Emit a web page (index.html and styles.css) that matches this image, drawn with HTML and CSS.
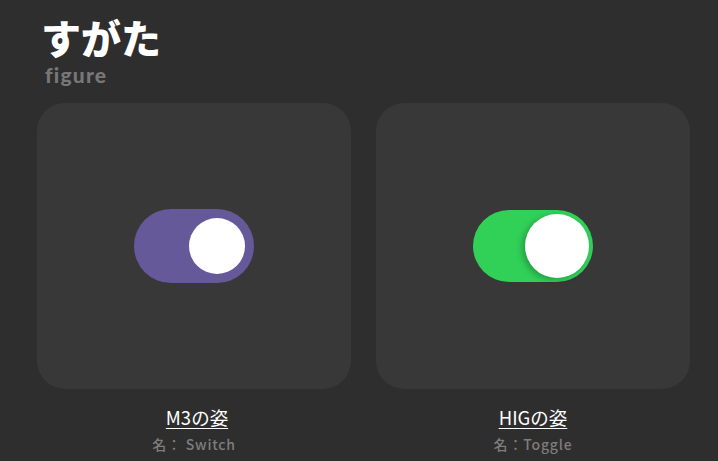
FILE: index.html
```html
<!DOCTYPE html>
<html lang="ja">
<head>
<meta charset="utf-8">
<link rel="stylesheet" href="styles.css">
</head>
<body>
<div class="page">
  <header class="head">
    <h1 class="title">すがた</h1>
    <div class="subtitle">figure</div>
  </header>
  <div class="grid">
    <div class="item">
      <div class="card">
        <div class="m3-track"><div class="m3-thumb"></div></div>
      </div>
      <div class="label label-shift"><a class="link">M3の姿</a></div>
      <div class="name">名： Switch</div>
    </div>
    <div class="item">
      <div class="card">
        <div class="hig-track"><div class="hig-thumb"></div></div>
      </div>
      <div class="label"><a class="link">HIGの姿</a></div>
      <div class="name">名：Toggle</div>
    </div>
  </div>
</div>
</body>
</html>
```
FILE: styles.css
```css
html, body {
  margin: 0;
  background: #2e2e2e;
  height: 100%;
  overflow: hidden;
}
.page {
  padding: 15px 0 0 37px;
  font-family: "Noto Sans CJK JP", "Noto Sans", sans-serif;
}
.head {
  padding-left: 4px;
}
.title {
  margin: 0;
  font-size: 40px;
  line-height: 44px;
  font-weight: 900;
  color: #ffffff;
}
.subtitle {
  margin-top: 4px;
  margin-left: 4px;
  font-family: Lato, "Noto Sans", sans-serif;
  font-size: 21px;
  line-height: 24px;
  font-weight: 900;
  color: #777777;
  letter-spacing: 1.2px;
}
.grid {
  margin-top: 16px;
  display: grid;
  grid-template-columns: 314px 314px;
  column-gap: 25px;
}
.card {
  height: 286px;
  background: #383838;
  border-radius: 28px;
  display: flex;
  align-items: center;
  justify-content: center;
}
.m3-track {
  width: 120px;
  height: 74px;
  border-radius: 37px;
  background: #66599a;
  display: flex;
  align-items: center;
  justify-content: flex-end;
  padding-right: 9px;
  box-sizing: border-box;
}
.m3-thumb {
  width: 56px;
  height: 56px;
  border-radius: 50%;
  background: #ffffff;
}
.hig-track {
  width: 120px;
  height: 72px;
  border-radius: 36px;
  background: #31d158;
  display: flex;
  align-items: center;
  justify-content: flex-end;
  padding-right: 4px;
  box-sizing: border-box;
}
.hig-thumb {
  width: 64px;
  height: 64px;
  border-radius: 50%;
  background: #ffffff;
  box-shadow: -3px 2px 6px rgba(0, 0, 0, 0.25);
}
.label {
  margin-top: 15px;
  text-align: center;
  font-size: 18.5px;
  line-height: 26px;
}
.label-shift {
  padding-left: 6px;
}
.link {
  color: #ffffff;
  text-decoration: underline;
  text-underline-offset: 3px;
}
.name {
  margin-top: 4px;
  text-align: center;
  font-size: 14px;
  line-height: 20px;
  font-weight: 500;
  color: #7d7d7d;
  letter-spacing: 0.8px;
}
```
